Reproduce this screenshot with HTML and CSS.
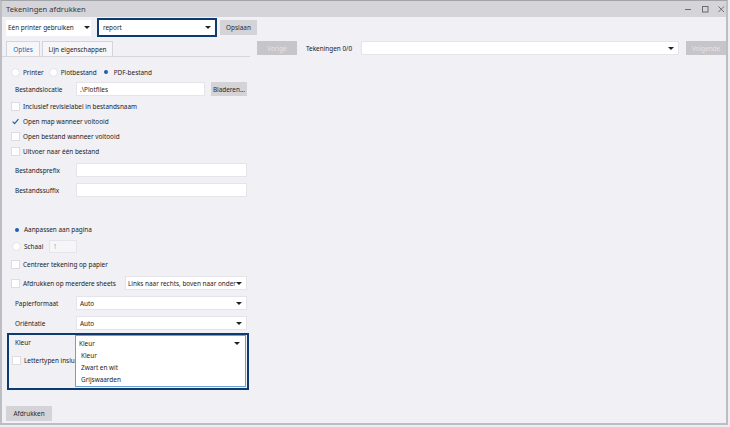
FILE: index.html
```html
<!DOCTYPE html>
<html lang="nl">
<head>
    <meta charset="UTF-8">
    <title>Tekeningen afdrukken</title>
    <link rel="stylesheet" href="styles.css">
</head>
<body>
    <div class="window">
        <div class="titlebar">
            <span class="title">Tekeningen afdrukken</span>
            <svg class="win-controls" width="40" height="8" viewBox="0 0 40 8">
                <line x1="0" y1="4.5" x2="6" y2="4.5" stroke="#6b6b72" stroke-width="1"/>
                <rect x="17.5" y="1.5" width="5.5" height="5.5" fill="none" stroke="#6b6b72" stroke-width="1"/>
                <path d="M33.5 1.5 L39 7 M39 1.5 L33.5 7" stroke="#6b6b72" stroke-width="1"/>
            </svg>
        </div>

        <div class="toolbar">
            <div class="select printer-select"><span>Eén printer gebruiken</span><i class="caret"></i></div>
            <div class="select report-select"><span>report</span><i class="caret"></i></div>
            <button class="btn save-btn">Opslaan</button>
        </div>

        <div class="main">
            <div class="left">
                <div class="tabs">
                    <div class="tab active">Opties</div>
                    <div class="tab tab-wide">Lijn eigenschappen</div>
                </div>

                <div class="options">
                    <div class="row radio-row">
                        <label class="opt"><span class="radio"></span>Printer</label>
                        <label class="opt"><span class="radio"></span>Plotbestand</label>
                        <label class="opt"><span class="radio checked"></span>PDF-bestand</label>
                    </div>

                    <div class="row field-row row-locatie">
                        <span class="label">Bestandslocatie</span>
                        <div class="input">.\Plotfiles</div>
                        <button class="btn browse-btn">Bladeren...</button>
                    </div>

                    <div class="row check-row first-check">
                        <span class="checkbox"></span>Inclusief revisielabel in bestandsnaam
                    </div>
                    <div class="row check-row">
                        <span class="checkbox checked">
                            <svg width="7" height="7" viewBox="0 0 7 7"><path d="M0.6 3.6 L2.6 5.6 L6.4 1.2" fill="none" stroke="#1f5fae" stroke-width="1.2"/></svg>
                        </span>Open map wanneer voltooid
                    </div>
                    <div class="row check-row">
                        <span class="checkbox"></span>Open bestand wanneer voltooid
                    </div>
                    <div class="row check-row">
                        <span class="checkbox"></span>Uitvoer naar één bestand
                    </div>

                    <div class="row field-row row-prefix">
                        <span class="label">Bestandsprefix</span>
                        <div class="input"></div>
                    </div>
                    <div class="row field-row row-suffix">
                        <span class="label">Bestandssuffix</span>
                        <div class="input"></div>
                    </div>

                    <div class="row radio-row row-fit">
                        <label class="opt"><span class="radio checked"></span>Aanpassen aan pagina</label>
                    </div>
                    <div class="row radio-row row-scale">
                        <label class="opt"><span class="radio"></span>Schaal</label>
                        <div class="input disabled scale-input">1</div>
                    </div>

                    <div class="row check-row row-center">
                        <span class="checkbox"></span>Centreer tekening op papier
                    </div>
                    <div class="row check-row row-sheets">
                        <span class="checkbox"></span>Afdrukken op meerdere sheets
                        <div class="select sheets-select"><span>Links naar rechts, boven naar onder</span><i class="caret"></i></div>
                    </div>

                    <div class="row field-row row-paper">
                        <span class="label">Papierformaat</span>
                        <div class="select"><span>Auto</span><i class="caret"></i></div>
                    </div>
                    <div class="row field-row row-orient">
                        <span class="label">Oriëntatie</span>
                        <div class="select"><span>Auto</span><i class="caret"></i></div>
                    </div>

                    <div class="color-frame">
                        <div class="row frame-row">
                            <span class="label">Kleur</span>
                        </div>
                        <div class="row check-row frame-check">
                            <span class="checkbox"></span><span class="clipped">Lettertypen insluiten</span>
                        </div>

                        <div class="dropdown">
                            <div class="dropdown-head"><span>Kleur</span><i class="caret"></i></div>
                            <div class="dropdown-item">Kleur</div>
                            <div class="dropdown-item">Zwart en wit</div>
                            <div class="dropdown-item">Grijswaarden</div>
                        </div>
                    </div>
                </div>
            </div>

            <div class="right">
                <div class="nav-row">
                    <button class="btn disabled nav-btn">Vorige</button>
                    <span class="nav-label">Tekeningen 0/0</span>
                    <div class="select nav-select"><span></span><i class="caret"></i></div>
                    <button class="btn disabled nav-btn">Volgende</button>
                </div>
            </div>
        </div>

        <div class="footer">
            <button class="btn print-btn">Afdrukken</button>
        </div>
    </div>
</body>
</html>
```

FILE: styles.css
```css
* {
    box-sizing: border-box;
}

body {
    margin: 0;
    background: #eeeef2;
    font-family: 'Noto Sans', 'DejaVu Sans', sans-serif;
    font-size: 6.4px;
    color: #1c1c1c;
}

.window {
    width: 728px;
    height: 425px;
    border: 2px solid #bdbdc4;
    border-top: 1px solid #a3a3aa;
    background: #f0f0f5;
    display: flex;
    flex-direction: column;
}

/* title bar */
.titlebar {
    height: 16px;
    background: #d4d4d9;
    display: flex;
    align-items: center;
    padding: 0 1px 0 4px;
    font-size: 7.6px;
    color: #3a3a3e;
}

.win-controls {
    margin-left: auto;
}

/* generic controls */
.btn {
    border: none;
    background: #d3d3d8;
    font-family: inherit;
    font-size: inherit;
    color: #2a2a2a;
    height: 15px;
    padding: 0;
}

.btn.disabled {
    background: #c5c5ca;
    color: #e4e4e8;
}

.select {
    display: flex;
    align-items: center;
    background: #fff;
    height: 14px;
    padding: 0 4px 0 3px;
    border: 1px solid #e4e4ea;
    flex: 1;
}

.select span {
    white-space: nowrap;
}

.caret {
    width: 0;
    height: 0;
    margin-left: auto;
    border-left: 3px solid transparent;
    border-right: 3px solid transparent;
    border-top: 3.5px solid #222;
}

.input {
    flex: 1;
    height: 14px;
    background: #fff;
    border: 1px solid #e4e4ea;
    padding-left: 3px;
    display: flex;
    align-items: center;
}

.input.disabled {
    background: #f6f6f9;
    color: #b0b0b4;
}

/* toolbar */
.toolbar {
    height: 21px;
    display: flex;
    align-items: center;
    padding-left: 4px;
}

.printer-select {
    flex: none;
    width: 85px;
    height: 16px;
    border: none;
    padding: 0 1px 0 2px;
    margin-right: 6px;
}

.report-select {
    flex: none;
    width: 120px;
    height: 19px;
    border: 2px solid #0e3b6f;
    padding: 0 4px 0 4px;
    margin-right: 3px;
}

.save-btn {
    width: 37px;
}

/* main area */
.main {
    flex: 1;
    display: flex;
    padding-top: 3px;
}

.left {
    width: 248px;
}

.tabs {
    display: flex;
    gap: 2px;
    padding-left: 4px;
    height: 16px;
    border-bottom: 1px solid #d6d6dc;
}

.tab {
    width: 34px;
    height: 15px;
    border: 1px solid #d4d4da;
    border-bottom: none;
    background: #f6f6f9;
    display: flex;
    align-items: center;
    justify-content: center;
}

.tab.active {
    color: #1f5fae;
}

.tab-wide {
    width: 71px;
}

.options {
    padding: 8px 3px 0 4px;
}

.row {
    display: flex;
    align-items: center;
    height: 15px;
}

.radio-row {
    height: 14px;
}

.opt {
    display: flex;
    align-items: center;
}

.radio {
    width: 9px;
    height: 9px;
    border-radius: 50%;
    background: #fff;
    border: 1px solid #e2e2e8;
    margin: 0 3px 0 5px;
    display: flex;
    align-items: center;
    justify-content: center;
}

.radio.checked {
    background: none;
    border: none;
}

.radio.checked::after {
    content: '';
    width: 4px;
    height: 4px;
    border-radius: 50%;
    background: #1c5fab;
}

.checkbox {
    width: 9px;
    height: 9px;
    background: #fff;
    border: 1px solid #dcdce2;
    margin: 0 3px 0 5px;
    display: flex;
    align-items: center;
    justify-content: center;
}

.checkbox.checked {
    background: none;
    border: none;
}

.label {
    width: 70px;
    padding-left: 9px;
    flex: none;
}

.row-locatie {
    height: 16px;
    margin-top: 2px;
}

.browse-btn {
    width: 36px;
    height: 14px;
    margin-left: 6px;
}

.first-check {
    height: 16px;
    margin-top: 1px;
}

.row-prefix {
    margin-top: 4px;
    height: 14px;
}

.row-suffix {
    margin-top: 6px;
    height: 14px;
}

.row-fit {
    margin-top: 25px;
    height: 15px;
}

.row-fit .radio,
.row-scale .radio {
    margin-left: 6px;
}

.row-scale {
    margin-top: 2px;
}

.scale-input {
    flex: none;
    width: 28px;
    height: 13px;
    margin-left: 6px;
}

.row-center {
    margin-top: 4px;
}

.row-sheets {
    margin-top: 4px;
    height: 14px;
}

.sheets-select {
    flex: none;
    width: 122px;
    margin-left: auto;
    padding-left: 2px;
}

.row-paper,
.row-orient {
    margin-top: 6px;
    height: 14px;
}

/* highlighted colour block with opened dropdown */
.color-frame {
    position: relative;
    width: 242px;
    height: 57px;
    margin: 3px 0 0 1px;
    border: 2px solid #0e3b6f;
}

.frame-row {
    height: 15px;
}

.frame-row .label {
    width: 66px;
    padding-left: 6px;
}

.frame-check {
    margin-top: 3px;
    height: 14px;
}

.frame-check .checkbox {
    margin-left: 3px;
}

/* label runs under the open list, so cut it where the list starts */
.clipped {
    width: 51px;
    overflow: hidden;
    white-space: nowrap;
}

.dropdown {
    position: absolute;
    left: 66px;
    top: 0;
    width: 171px;
    border: 1px solid #6d9fd3;
    background: #fff;
}

.dropdown-head {
    display: flex;
    align-items: center;
    height: 14px;
    padding: 0 5px 0 3px;
}

.dropdown-item {
    height: 12px;
    line-height: 12px;
    padding-left: 5px;
}

/* right side */
.right {
    flex: 1;
    padding: 0 0 0 7px;
}

.nav-row {
    display: flex;
    align-items: center;
    height: 14px;
}

.nav-btn {
    width: 40px;
    height: 14px;
}

.nav-label {
    margin: 0 9px;
    white-space: nowrap;
}

.nav-select {
    height: 14px;
    margin-right: 7px;
    padding-right: 4px;
}

/* footer */
.footer {
    padding: 0 0 2px 4px;
}

.print-btn {
    width: 46px;
}
```
